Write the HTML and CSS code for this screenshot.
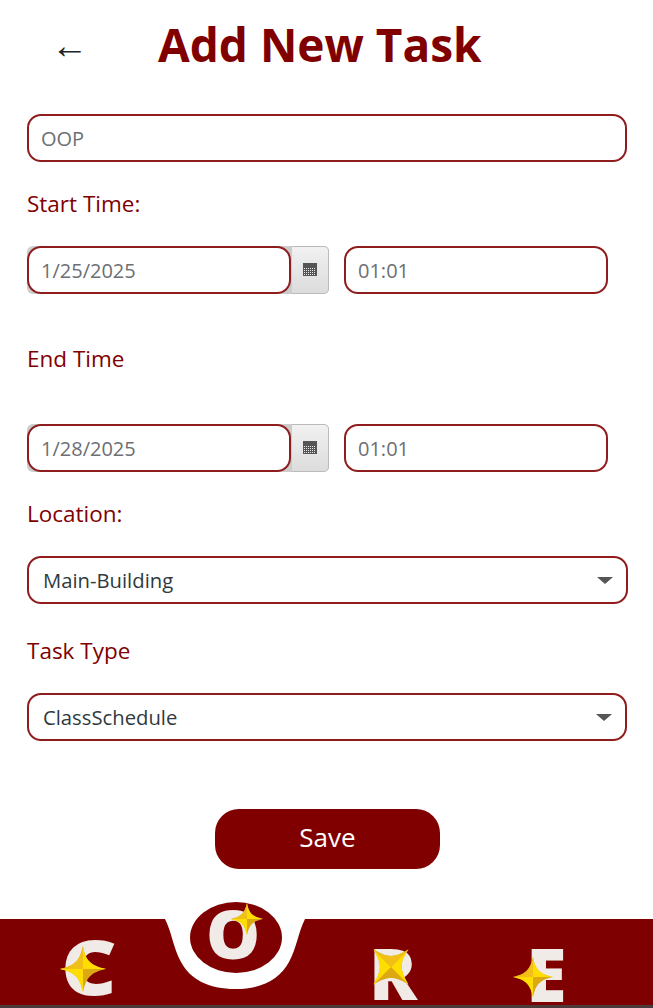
FILE: index.html
```html
<!DOCTYPE html>
<html lang="en">
<head>
<meta charset="utf-8">
<title>Add New Task</title>
<link rel="stylesheet" href="styles.css">
</head>
<body>
<svg class="defs" width="0" height="0" aria-hidden="true">
  <defs>
    <symbol id="star" viewBox="-20 -20 40 40">
      <path fill="#dca912" d="M0-20C2-7 7-3 20 0 7 3 3 7 0 20-3 7-7 3-20 0-7-3-3-7 0-20Z"/>
      <path fill="#ffdd00" d="M0-20C2-7 7-3 20 0H0ZM0 20C-3 7-7 3-20 0H0Z"/>
      <path fill="#f0bf18" d="M0-20C-3-7-7-3-20 0H0Z"/>
    </symbol>
    <symbol id="cal" viewBox="0 0 14 14">
      <path fill="#555" d="M0 0h14v13H0z"/>
      <path stroke="#e8e8e8" stroke-width="1" stroke-dasharray="1 1" d="M1 5.500h12M1 7.500h12M1 9.500h12M1 11.500h12"/>
    </symbol>
  </defs>
</svg>
<div class="page">
  <header class="head">
    <span class="back">←</span>
    <h1 class="title">Add New Task</h1>
  </header>
  <form class="form">
    <input class="field field-full" type="text" value="OOP">
    <label class="label label-a">Start Time:</label>
    <div class="row">
      <div class="date">
        <input class="field field-date" type="text" value="1/25/2025">
        <span class="cal-btn"><svg class="cal" width="14" height="14"><use href="#cal"/></svg></span>
      </div>
      <input class="field field-time" type="text" value="01:01">
    </div>
    <label class="label label-b">End Time</label>
    <div class="row">
      <div class="date">
        <input class="field field-date" type="text" value="1/28/2025">
        <span class="cal-btn"><svg class="cal" width="14" height="14"><use href="#cal"/></svg></span>
      </div>
      <input class="field field-time" type="text" value="01:01">
    </div>
    <label class="label label-a">Location:</label>
    <div class="select-wrap select-wide">
      <select class="select"><option>Main-Building</option></select>
    </div>
    <label class="label label-c">Task Type</label>
    <div class="select-wrap">
      <select class="select"><option>ClassSchedule</option></select>
    </div>
    <button class="save" type="button">Save</button>
  </form>
  <footer class="nav">
    <svg class="notch" width="653" height="86" viewBox="0 0 653 86" aria-hidden="true">
      <path fill="#fff" d="M165 0H305C298 14 297 28 289 43 280 60 262 70 236 70 208 70 190 60 181 43 173 28 172 14 165 0Z"/>
    </svg>
    <svg class="oval" width="92" height="71" viewBox="0 0 92 71" aria-hidden="true"><ellipse cx="46" cy="35.500" rx="46" ry="35.500" fill="#7e0000"/></svg>
    <span class="letter letter-c">C</span>
    <span class="letter letter-o">O</span>
    <span class="letter letter-r">R</span>
    <span class="letter letter-e">E</span>
    <svg class="star star-c"><use href="#star"/></svg>
    <svg class="star star-o"><use href="#star"/></svg>
    <svg class="star star-r"><use href="#star"/></svg>
    <svg class="star star-e"><use href="#star"/></svg>
  </footer>
</div>
</body>
</html>
```

FILE: styles.css
```css
* {
  box-sizing: border-box;
}

html,
body {
  margin: 0;
  padding: 0;
  background: #fff;
}

body {
  font-family: "Open Sans", "Noto Sans", sans-serif;
}

.defs {
  display: block;
  height: 0;
}

.page {
  width: 653px;
  height: 1008px;
  display: flex;
  flex-direction: column;
}

.head {
  height: 114px;
  display: flex;
  align-items: flex-start;
}

.back {
  margin: 24px 0 0 51px;
  width: 107px;
  font-family: "Liberation Sans", sans-serif;
  font-size: 37px;
  line-height: 44px;
  color: #212529;
}

.title {
  margin: 12px 0 0;
  font-size: 46px;
  line-height: 64px;
  font-weight: 700;
  color: #800000;
}

.form {
  display: flex;
  flex-direction: column;
  align-items: flex-start;
  padding-left: 27px;
}

.field {
  height: 48px;
  border: 2px solid #8f1d1d;
  border-radius: 14px;
  background: #fff;
  font-family: inherit;
  font-size: 20px;
  color: #6c6f73;
  padding: 0 12px;
  outline: none;
}

.field-full {
  width: 600px;
}

.field-date {
  width: 264px;
  position: relative;
}

.field-time {
  width: 264px;
  margin-left: 15px;
}

.label {
  height: 30px;
  font-size: 22.500px;
  line-height: 30px;
  color: #800000;
}

.label-a {
  margin: 27px 0;
}

.label-b {
  margin: 50px 0;
}

.label-c {
  margin: 32px 0 27px;
}

.row {
  display: flex;
}

.date {
  width: 302px;
  height: 48px;
  display: flex;
  border-radius: 6px;
  background: #ccc;
}

.cal-btn {
  width: 38px;
  height: 48px;
  display: flex;
  align-items: center;
  justify-content: center;
  border: 1px solid #bbb;
  border-left-color: #ccc;
  border-radius: 0 5px 5px 0;
  background: linear-gradient(#f1f1f1, #dcdcdc);
}

.cal {
  display: block;
}

.select-wrap {
  position: relative;
  width: 600px;
}

.select-wide {
  width: 601px;
}

.select-wrap::after {
  content: "";
  position: absolute;
  right: 15px;
  top: 21px;
  border-style: solid;
  border-width: 7px 8px 0;
  border-color: #555 transparent transparent;
}

.select {
  display: block;
  width: 100%;
  height: 48px;
  border: 2px solid #8f1d1d;
  border-radius: 14px;
  background: #fff;
  font-family: inherit;
  font-size: 20.250px;
  color: #2f3a40;
  padding: 0 14px;
  appearance: none;
  outline: none;
}

.save {
  align-self: flex-start;
  margin: 68px 0 50px 188px;
  width: 225px;
  height: 60px;
  border: 0;
  border-radius: 24px;
  background: #800000;
  color: #fff;
  font-family: inherit;
  font-size: 26px;
  line-height: 56px;
  padding: 0 0 4px;
}

.nav {
  position: relative;
  height: 89px;
  background: #7e0000;
  border-bottom: 3px solid #4b3a3a;
}

.notch {
  position: absolute;
  left: 0;
  top: 0;
}

.oval {
  position: absolute;
  left: 190px;
  top: -17px;
}

.letter {
  position: absolute;
  font-weight: 800;
  color: #f0ebe6;
  line-height: 0.75;
}

.letter-c {
  left: 61px;
  top: 18px;
  font-size: 77px;
  transform: scaleX(1.12);
  transform-origin: left center;
}

.letter-o {
  left: 206px;
  top: -12px;
  font-size: 68px;
}

.letter-r {
  left: 369px;
  top: 27px;
  font-size: 71px;
}

.letter-e {
  left: 526px;
  top: 27px;
  font-size: 74px;
}

.star {
  position: absolute;
}

.star-c {
  left: 60px;
  top: 27px;
  width: 46px;
  height: 46px;
}

.star-o {
  left: 231px;
  top: -16px;
  width: 32px;
  height: 32px;
}

.star-r {
  left: 366px;
  top: 23px;
  width: 50px;
  height: 50px;
  transform: rotate(45deg);
}

.star-e {
  left: 513px;
  top: 38px;
  width: 40px;
  height: 40px;
}
```
